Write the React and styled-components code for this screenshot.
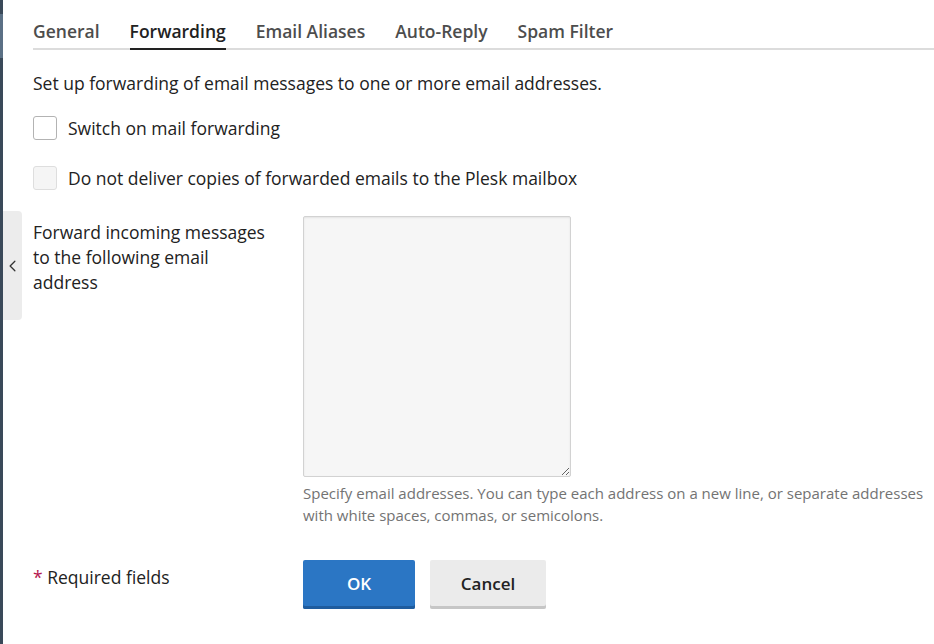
import React, { useState } from "react";
import styled, { createGlobalStyle } from "styled-components";
import { ChevronLeft } from "lucide-react";

const tabs = ["General", "Forwarding", "Email Aliases", "Auto-Reply", "Spam Filter"];

export default function App() {
  const [active, setActive] = useState("Forwarding");
  const [forwarding, setForwarding] = useState(false);

  return (
    <>
      <GlobalStyle />
      <Page>
        <Sidebar>
          <SidebarMark />
        </Sidebar>
        <Main>
          <CollapseHandle type="button" aria-label="Collapse">
            <ChevronLeft size={20} strokeWidth={1.6} />
          </CollapseHandle>

          <TabList>
            {tabs.map((tab) => (
              <Tab key={tab} $active={tab === active} onClick={() => setActive(tab)}>
                {tab}
              </Tab>
            ))}
          </TabList>

          <Intro>Set up forwarding of email messages to one or more email addresses.</Intro>

          <CheckRow>
            <CheckBox
              type="checkbox"
              checked={forwarding}
              onChange={(e) => setForwarding(e.target.checked)}
            />
            Switch on mail forwarding
          </CheckRow>
          <CheckRow $gap>
            <CheckBox type="checkbox" disabled />
            Do not deliver copies of forwarded emails to the Plesk mailbox
          </CheckRow>

          <FormRow>
            <FieldLabel>Forward incoming messages to the following email address</FieldLabel>
            <Field>
              <TextArea disabled={!forwarding} />
              <Hint>
                Specify email addresses. You can type each address on a new line, or separate
                addresses with white spaces, commas, or semicolons.
              </Hint>
            </Field>
          </FormRow>

          <ButtonRow>
            <Required>
              <Star>*</Star> Required fields
            </Required>
            <Buttons>
              <Button $primary>OK</Button>
              <Button>Cancel</Button>
            </Buttons>
          </ButtonRow>
        </Main>
      </Page>
    </>
  );
}

const GlobalStyle = createGlobalStyle`
  html, body {
    margin: 0;
    padding: 0;
    background: #fff;
    overflow: hidden;
  }
  body {
    font-family: "Open Sans", "Liberation Sans", sans-serif;
    color: #222;
  }
`;

const Page = styled.div`
  display: flex;
  height: 644px;
  width: 934px;
`;

const Sidebar = styled.div`
  width: 3px;
  flex-shrink: 0;
  background: #3a4959;
  padding-top: 14px;
`;

const SidebarMark = styled.div`
  height: 44px;
  background: #5b7085;
`;

const Main = styled.main`
  position: relative;
  flex: 1;
  padding: 19px 0 0 30px;
`;

const CollapseHandle = styled.button`
  position: absolute;
  left: 0;
  top: 211px;
  width: 19px;
  height: 109px;
  padding: 0;
  border: none;
  border-radius: 0 4px 4px 0;
  background: #ececec;
  color: #333;
  display: flex;
  align-items: center;
  justify-content: center;
  cursor: pointer;
`;

const TabList = styled.div`
  display: flex;
  gap: 30px;
  border-bottom: 2px solid #dcdcdc;
`;

const Tab = styled.div`
  font-size: 17.5px;
  font-weight: 600;
  line-height: 24px;
  padding-bottom: 5px;
  margin-bottom: -2px;
  color: ${(p) => (p.$active ? "#222" : "#4d4d4d")};
  border-bottom: 2px solid ${(p) => (p.$active ? "#222" : "transparent")};
  cursor: pointer;
`;

const Intro = styled.p`
  margin: 21px 0 0;
  font-size: 17.5px;
  line-height: 24px;
`;

const CheckRow = styled.label`
  display: flex;
  align-items: center;
  gap: 11px;
  margin-top: ${(p) => (p.$gap ? "26px" : "21px")};
  font-size: 17.5px;
  line-height: 24px;
`;

const CheckBox = styled.input`
  appearance: none;
  margin: 0;
  width: 24px;
  height: 24px;
  border: 1px solid #b3b3b3;
  border-radius: 3px;
  background: #fff;
  box-sizing: border-box;

  &:disabled {
    background: #f5f5f5;
    border-color: #dedede;
  }

  &:checked {
    background: #2b76c4;
    border-color: #2b76c4;
  }
`;

const FormRow = styled.div`
  display: flex;
  margin-top: 26px;
`;

const FieldLabel = styled.div`
  width: 270px;
  flex-shrink: 0;
  box-sizing: border-box;
  padding: 4px 30px 0 0;
  font-size: 17.5px;
  line-height: 25px;
`;

const Field = styled.div`
  flex: 1;
`;

const TextArea = styled.textarea`
  display: block;
  width: 268px;
  height: 261px;
  box-sizing: border-box;
  margin: 0;
  border: 1px solid #d2d2d2;
  border-radius: 2px;
  background: #f6f6f6;
  box-shadow: inset 0 1px 2px rgba(0, 0, 0, 0.08);
  font-family: inherit;
  font-size: 14px;
`;

const Hint = styled.div`
  margin-top: 5px;
  font-size: 15px;
  line-height: 22px;
  color: #737373;
`;

const ButtonRow = styled.div`
  display: flex;
  margin-top: 34px;
`;

const Required = styled.div`
  width: 270px;
  flex-shrink: 0;
  padding-top: 5px;
  font-size: 17.5px;
  line-height: 24px;
`;

const Star = styled.span`
  color: #b5174f;
`;

const Buttons = styled.div`
  display: flex;
  gap: 15px;
`;

const Button = styled.button`
  height: 49px;
  min-width: ${(p) => (p.$primary ? "112px" : "116px")};
  padding: 0 30px 3px;
  border: none;
  border-radius: 2px;
  font-family: inherit;
  font-size: 17px;
  font-weight: 600;
  cursor: pointer;
  background: ${(p) => (p.$primary ? "#2b76c4" : "#ebebeb")};
  color: ${(p) => (p.$primary ? "#fff" : "#222")};
  box-shadow: inset 0 -3px 0 ${(p) => (p.$primary ? "#1f5c9e" : "#c6c6c6")};
`;
